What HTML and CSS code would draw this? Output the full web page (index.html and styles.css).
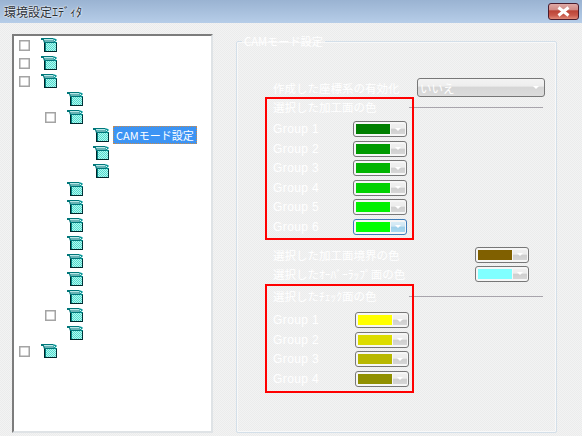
FILE: index.html
```html
<!DOCTYPE html>
<html lang="ja">
<head>
<meta charset="utf-8">
<title>環境設定エディタ</title>
<link rel="stylesheet" href="styles.css">
</head>
<body>
<svg class="defs" width="0" height="0" aria-hidden="true">
  <defs>
    <pattern id="dither" width="2" height="2" patternUnits="userSpaceOnUse">
      <rect width="2" height="2" fill="#4fdccf"/>
      <rect width="1" height="1" fill="#b4f6ee"/>
      <rect x="1" y="1" width="1" height="1" fill="#b4f6ee"/>
    </pattern>
    <symbol id="box" viewBox="0 0 16 14">
      <rect x="3" y="4" width="12" height="10" fill="#00262a"/>
      <rect x="5" y="5" width="10" height="8" fill="url(#dither)"/>
      <path d="M4 4h12v1H5v8H4z" fill="#007f80"/>
      <path d="M15 5h1v9h-1z" fill="#003439"/>
      <path d="M0 0h12v1l1 4H3L2 2H0z" fill="#00777a"/>
      <path d="M3 1h9v1H3z" fill="#b8e8e8"/>
      <path d="M3 2h9l1 2H4z" fill="#68b4b6"/>
      <path d="M12 0l3 1 1 1-3 3z" fill="#0a9698"/>
      <path d="M13 2h1v1h-1z" fill="#d8fbf8"/>
    </symbol>
  </defs>
</svg>
<div class="window">
  <header class="titlebar">
    <span class="title">環境設定ｴﾃﾞｨﾀ</span>
    <button class="close" type="button" aria-label="閉じる">
      <svg width="15" height="11" viewBox="0 0 15 11"><path d="M2.5 1.5l10 8M12.5 1.5l-10 8" stroke="#fff" stroke-width="3" fill="none"/></svg>
    </button>
  </header>
  <main class="content">
    <div class="tree">
      <div class="row"><span class="check"></span><svg class="icon"><use href="#box"/></svg></div>
      <div class="row"><span class="check"></span><svg class="icon"><use href="#box"/></svg></div>
      <div class="row"><span class="check"></span><svg class="icon"><use href="#box"/></svg></div>
      <div class="row l1"><span class="slot"></span><svg class="icon"><use href="#box"/></svg></div>
      <div class="row l1"><span class="check"></span><svg class="icon"><use href="#box"/></svg></div>
      <div class="row l2"><span class="slot"></span><svg class="icon"><use href="#box"/></svg><span class="node selected">CAMモード設定</span></div>
      <div class="row l2"><span class="slot"></span><svg class="icon"><use href="#box"/></svg></div>
      <div class="row l2"><span class="slot"></span><svg class="icon"><use href="#box"/></svg></div>
      <div class="row l1"><span class="slot"></span><svg class="icon"><use href="#box"/></svg></div>
      <div class="row l1"><span class="slot"></span><svg class="icon"><use href="#box"/></svg></div>
      <div class="row l1"><span class="slot"></span><svg class="icon"><use href="#box"/></svg></div>
      <div class="row l1"><span class="slot"></span><svg class="icon"><use href="#box"/></svg></div>
      <div class="row l1"><span class="slot"></span><svg class="icon"><use href="#box"/></svg></div>
      <div class="row l1"><span class="slot"></span><svg class="icon"><use href="#box"/></svg></div>
      <div class="row l1"><span class="slot"></span><svg class="icon"><use href="#box"/></svg></div>
      <div class="row l1"><span class="check"></span><svg class="icon"><use href="#box"/></svg></div>
      <div class="row l1"><span class="slot"></span><svg class="icon"><use href="#box"/></svg></div>
      <div class="row"><span class="check"></span><svg class="icon"><use href="#box"/></svg></div>
    </div>
    <fieldset class="panel">
      <legend class="legend">CAMモード設定</legend>
      <div class="enable-row">
        <span class="label enable-label">作成した座標系の有効化</span>
        <div class="select"><span>いいえ</span><i class="caret"></i></div>
      </div>
      <div class="heading heading-first"><span class="label heading-label">選択した加工面の色</span><span class="rule"></span></div>
      <div class="group"><span class="label group-label">Group 1</span><div class="color"><span class="swatch c1"></span><span class="arrow"><i class="caret"></i></span></div></div>
      <div class="group"><span class="label group-label">Group 2</span><div class="color"><span class="swatch c2"></span><span class="arrow"><i class="caret"></i></span></div></div>
      <div class="group"><span class="label group-label">Group 3</span><div class="color"><span class="swatch c3"></span><span class="arrow"><i class="caret"></i></span></div></div>
      <div class="group"><span class="label group-label">Group 4</span><div class="color"><span class="swatch c4"></span><span class="arrow"><i class="caret"></i></span></div></div>
      <div class="group"><span class="label group-label">Group 5</span><div class="color"><span class="swatch c5"></span><span class="arrow"><i class="caret"></i></span></div></div>
      <div class="group"><span class="label group-label">Group 6</span><div class="color focused"><span class="swatch c6"></span><span class="arrow"><i class="caret"></i></span></div></div>
      <div class="single single-first"><span class="label single-label">選択した加工面境界の色</span><div class="color"><span class="swatch c7"></span><span class="arrow"><i class="caret"></i></span></div></div>
      <div class="single"><span class="label single-label">選択したｵｰﾊﾞｰﾗｯﾌﾟ面の色</span><div class="color"><span class="swatch c8"></span><span class="arrow"><i class="caret"></i></span></div></div>
      <div class="heading heading-second"><span class="label heading-label">選択したﾁｪｯｸ面の色</span><span class="rule rule-low"></span></div>
      <div class="group"><span class="label group-label wide">Group 1</span><div class="color"><span class="swatch y1"></span><span class="arrow"><i class="caret"></i></span></div></div>
      <div class="group"><span class="label group-label wide">Group 2</span><div class="color"><span class="swatch y2"></span><span class="arrow"><i class="caret"></i></span></div></div>
      <div class="group"><span class="label group-label wide">Group 3</span><div class="color"><span class="swatch y3"></span><span class="arrow"><i class="caret"></i></span></div></div>
      <div class="group"><span class="label group-label wide">Group 4</span><div class="color"><span class="swatch y4"></span><span class="arrow"><i class="caret"></i></span></div></div>
    </fieldset>
  </main>
  <div class="mark mark-top"></div>
  <div class="mark mark-bottom"></div>
</div>
</body>
</html>
```
FILE: styles.css
```css
* { box-sizing: border-box; }
html, body { margin: 0; padding: 0; }
body {
  width: 582px;
  height: 436px;
  overflow: hidden;
  font-family: "Noto Sans CJK JP", "Liberation Sans", sans-serif;
  font-size: 11.5px;
}
.defs { position: absolute; }
.window {
  position: relative;
  width: 582px;
  height: 436px;
  background: repeating-conic-gradient(#f3f3f3 0 25%, #ebecec 0 50%) 0 0 / 2px 2px;
}
.titlebar {
  height: 23px;
  display: flex;
  align-items: flex-start;
  justify-content: space-between;
  padding: 3px 3px 0 4px;
  background: linear-gradient(#9ab3d2, #b6cde8);
}
.title {
  font-size: 12px;
  line-height: 17px;
  color: #2a3038;
  text-shadow: 0 0 2px #fff, 0 0 2px #fff;
}
.close {
  width: 31px;
  height: 17px;
  padding: 0;
  display: flex;
  align-items: center;
  justify-content: center;
  border: 1px solid #4a1c2c;
  border-radius: 3px;
  background: linear-gradient(#dfa9a6 0, #d08a84 40%, #bb4336 45%, #c9584a 75%, #e08a78 100%);
}
.content {
  display: flex;
  gap: 23px;
  height: 413px;
  padding: 11px 25px 3px 12px;
}
.tree {
  width: 201px;
  background: #fff;
  border-style: solid;
  border-width: 2px;
  border-color: #7c7c7c #dfe3e6 #dfe3e6 #7c7c7c;
}
.row {
  display: flex;
  align-items: center;
  height: 18px;
  padding-left: 5px;
}
.l1 { padding-left: 31px; }
.l2 { padding-left: 57px; }
.check {
  flex: none;
  width: 11px;
  height: 11px;
  margin-right: 11px;
  border: 1px solid #a4a4a4;
  box-shadow: inset 0 0 0 0.5px #a4a4a4;
  background: #fff;
}
.slot { flex: none; width: 22px; }
.icon { flex: none; width: 16px; height: 14px; }
.node { margin-left: 4px; }
.selected {
  height: 18px;
  padding: 0 2px;
  line-height: 16px;
  font-size: 11px;
  color: #fff;
  background: #3c94f4;
  border: 1px dotted #c98a4a;
  white-space: nowrap;
}
.panel {
  width: 321px;
  margin: 0;
  padding: 0 0 0 36px;
  border: 1px solid #d3dfe9;
  border-radius: 2px;
  box-shadow: inset 0 0 0 1px rgba(255, 255, 255, .6);
  min-width: 0;
}
.legend {
  margin-left: -31px;
  padding: 0 2px;
  font-size: 11.2px;
  line-height: 14px;
  color: #fff;
}
.label {
  color: #fff;
  line-height: 18px;
  white-space: nowrap;
}
.enable-row {
  display: flex;
  align-items: center;
  height: 19px;
  margin-top: 30px;
}
.enable-label { width: 144px; flex: none; }
.select {
  flex: none;
  width: 128px;
  height: 19px;
  display: flex;
  align-items: center;
  justify-content: space-between;
  padding: 0 5px 0 2px;
  border: 1px solid #777;
  border-radius: 3px;
  color: #fff;
  background: linear-gradient(#f3f3f3 0, #eeeeee 40%, #d6d6d6 50%, #dcdcdc 100%);
}
.heading { display: flex; align-items: center; width: 270px; height: 18px; }
.heading-first { margin-bottom: 5px; margin-top: 1px; }
.heading-second { margin-top: 2px; margin-bottom: 7.5px; }
.heading-label { width: 136px; flex: none; }
.rule { flex: 1; height: 1px; background: #a8a4ac; }
.rule-low { position: relative; top: 1px; }
.group {
  display: flex;
  align-items: flex-start;
  height: 19.5px;
}
.group-label {
  width: 80px;
  flex: none;
  font-family: "Liberation Sans", sans-serif;
  font-size: 12px;
  letter-spacing: .4px;
  line-height: 16px;
}
.wide { width: 82px; }
.single { display: flex; align-items: flex-start; height: 19px; }
.single-first { margin-top: 8.5px; }
.single-label { width: 202px; flex: none; line-height: 16px; }
.color {
  flex: none;
  width: 54px;
  height: 16px;
  display: flex;
  align-items: stretch;
  padding: 2px 1px 2px 2px;
  border: 1px solid #777;
  border-radius: 3px;
  background: #f6f6f6;
}
.swatch { width: 34px; }
.arrow {
  flex: 1;
  margin-left: 1px;
  display: flex;
  align-items: center;
  justify-content: center;
  background: linear-gradient(#efefef 0, #ededed 40%, #cfcfcf 55%, #d6d6d6 100%);
}
.caret {
  display: block;
  width: 0;
  height: 0;
  border-style: solid;
  border-width: 3px 3px 0;
  border-color: #fff transparent transparent;
}
.focused { border-color: #3d7cb8; }
.focused .arrow { background: linear-gradient(#d8ecf6 0, #cfe6f3 40%, #9fd0ea 55%, #a8d8ee 100%); }
.c1 { background: #007f00; }
.c2 { background: #009a00; }
.c3 { background: #00b400; }
.c4 { background: #00d200; }
.c5 { background: #00f000; }
.c6 { background: #00ff00; }
.c7 { background: #806000; }
.c8 { background: #80ffff; }
.y1 { background: #ffff00; }
.y2 { background: #dcdc00; }
.y3 { background: #b8b800; }
.y4 { background: #909000; }
.mark {
  position: absolute;
  left: 265px;
  width: 149px;
  border: 2px solid #ff0000;
  pointer-events: none;
}
.mark-top { top: 97px; height: 143px; }
.mark-bottom { top: 284px; height: 109px; }
```
